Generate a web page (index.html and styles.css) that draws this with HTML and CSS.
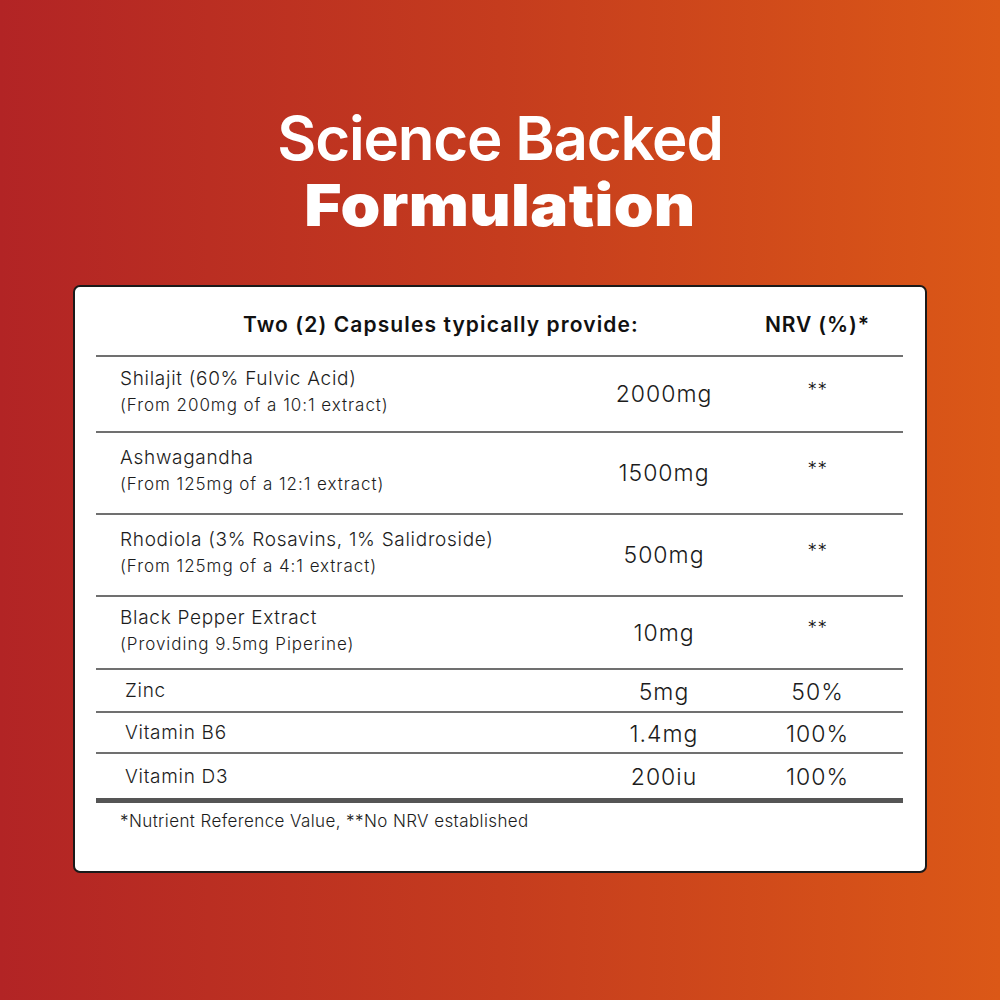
FILE: index.html
```html
<!DOCTYPE html>
<html>
<head>
<meta charset="utf-8">
<link rel="stylesheet" href="styles.css">
</head>
<body>
<div class="page">
  <h1 class="title"><span class="t1">Science Backed</span><span class="t2">Formulation</span></h1>
  <div class="card">
    <div class="head">
      <div class="head-main">Two (2) Capsules typically provide:</div>
      <div class="head-nrv">NRV (%)*</div>
    </div>
    <div class="row tall r1">
      <div class="name"><div class="main">Shilajit (60% Fulvic Acid)</div><div class="sub">(From 200mg of a 10:1 extract)</div></div>
      <div class="amt">2000mg</div>
      <div class="nrv star">**</div>
    </div>
    <div class="row tall r2">
      <div class="name"><div class="main">Ashwagandha</div><div class="sub">(From 125mg of a 12:1 extract)</div></div>
      <div class="amt">1500mg</div>
      <div class="nrv star">**</div>
    </div>
    <div class="row tall r3">
      <div class="name"><div class="main">Rhodiola (3% Rosavins, 1% Salidroside)</div><div class="sub">(From 125mg of a 4:1 extract)</div></div>
      <div class="amt">500mg</div>
      <div class="nrv star">**</div>
    </div>
    <div class="row tall r4">
      <div class="name"><div class="main">Black Pepper Extract</div><div class="sub">(Providing 9.5mg Piperine)</div></div>
      <div class="amt">10mg</div>
      <div class="nrv star">**</div>
    </div>
    <div class="row short s1">
      <div class="name"><div class="main">Zinc</div></div>
      <div class="amt">5mg</div>
      <div class="nrv">50%</div>
    </div>
    <div class="row short s2">
      <div class="name"><div class="main">Vitamin B6</div></div>
      <div class="amt">1.4mg</div>
      <div class="nrv">100%</div>
    </div>
    <div class="row short s3 last">
      <div class="name"><div class="main">Vitamin D3</div></div>
      <div class="amt">200iu</div>
      <div class="nrv">100%</div>
    </div>
    <div class="foot">*Nutrient Reference Value, **No NRV established</div>
  </div>
</div>
</body>
</html>
```

FILE: styles.css
```css
html, body {
  margin: 0;
  padding: 0;
}
.page {
  width: 1000px;
  height: 1000px;
  background: linear-gradient(90deg, #b22425 0%, #c53c1e 50%, #db5817 100%);
  display: flex;
  flex-direction: column;
  align-items: center;
  font-family: Inter, "Liberation Sans", sans-serif;
  box-sizing: border-box;
  padding-top: 106px;
}
.title {
  margin: 0;
  color: #fff;
  display: flex;
  flex-direction: column;
  align-items: center;
  line-height: 1;
}
.t1 {
  font-size: 60px;
  font-weight: 600;
  letter-spacing: -1.2px;
  height: 64px;
  line-height: 64px;
}
.t2 {
  font-size: 58px;
  font-weight: 900;
  letter-spacing: 0.3px;
  height: 70px;
  line-height: 70px;
  transform: scaleX(1.1);
}
.card {
  margin-top: 45px;
  width: 854px;
  height: 588px;
  box-sizing: border-box;
  background: #fff;
  border: 2px solid #1a1a1a;
  border-radius: 7px;
  padding: 0 22px 0 21px;
  color: #1c1c1c;
}
.head {
  display: grid;
  grid-template-columns: 636px 171px;
  height: 70px;
  align-items: center;
  border-bottom: 2px solid #707070;
  font-weight: 600;
  font-size: 21px;
  letter-spacing: 1.1px;
  color: #111;
  padding-top: 6px;
  box-sizing: border-box;
}
.head-main {
  padding-left: 147px;
}
.head-nrv {
  text-align: center;
  letter-spacing: 0.9px;
}
.row {
  display: grid;
  grid-template-columns: 500px 136px 171px;
  align-items: center;
  border-bottom: 2px solid #707070;
  box-sizing: border-box;
}
.row.last {
  border-bottom: 5px solid #555;
}
.r1 { height: 76px; }
.r2 { height: 82px; }
.r3 { height: 82px; }
.r4 { height: 73px; }
.s1 { height: 43px; }
.s2 { height: 41px; }
.s3 { height: 49px; }
.name {
  padding-left: 24px;
  font-weight: 350;
}
.short .name {
  padding-left: 29px;
}
.main {
  font-size: 19px;
  letter-spacing: 0.7px;
  line-height: 27px;
}
.sub {
  font-size: 17px;
  letter-spacing: 0.95px;
  line-height: 27px;
}
.tall .name {
  padding-bottom: 4px;
}
.amt, .nrv {
  text-align: center;
  font-size: 23px;
  font-weight: 350;
  letter-spacing: 1px;
}
.star {
  font-size: 19px;
  letter-spacing: 0.5px;
  padding-bottom: 10px;
}
.short .amt, .short .nrv {
  padding-top: 2px;
}
.foot {
  font-size: 17px;
  font-weight: 350;
  letter-spacing: 0.4px;
  padding-left: 24px;
  padding-top: 8px;
}
```
